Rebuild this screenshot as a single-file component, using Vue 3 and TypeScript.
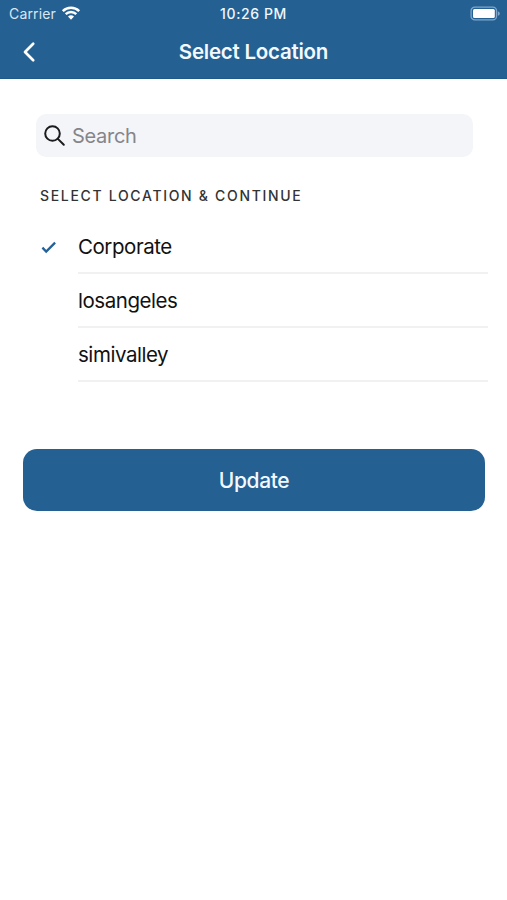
<script setup lang="ts">
import { ref, computed } from 'vue'

const locations = ['Corporate', 'losangeles', 'simivalley']
const selected = ref('Corporate')
const query = ref('')
const visible = computed(() =>
  locations.filter((name) => name.toLowerCase().includes(query.value.toLowerCase()))
)
</script>

<template>
  <div class="screen">
    <header class="header">
      <div class="status">
        <div class="carrier">
          <span>Carrier</span>
          <svg class="wifi" width="20" height="15" viewBox="0 0 20 15">
            <path d="M1.8 5.1A11.7 11.7 0 0 1 18.2 5.1M4.7 8.2A7.6 7.6 0 0 1 15.3 8.2" />
            <path class="dot" d="M7 10.6A4.4 4.4 0 0 1 13 10.6L10 13.7Z" />
          </svg>
        </div>
        <span class="time">10:26 PM</span>
        <svg class="battery" width="32" height="16" viewBox="0 0 32 16">
          <rect class="shell" x="1.1" y="1.2" width="25.4" height="12.6" rx="3.6" />
          <rect class="charge" x="3" y="3.1" width="21.8" height="8.8" rx="1.5" />
          <path class="cap" d="M27.8 5.2C30.4 6 30.4 9 27.8 9.8Z" />
        </svg>
      </div>
      <div class="nav">
        <button class="back" aria-label="Back">
          <svg width="14" height="22" viewBox="0 0 14 22">
            <path d="M11.2 2.8L3 11L11.2 19.2" />
          </svg>
        </button>
        <h1 class="title">Select Location</h1>
      </div>
    </header>

    <main class="content">
      <label class="search">
        <svg class="lens" width="24" height="24" viewBox="0 0 24 24">
          <circle cx="9.5" cy="9.5" r="7.3" />
          <path d="M14.9 14.9L20.8 20.8" />
        </svg>
        <input v-model="query" class="field" type="text" placeholder="Search" />
      </label>

      <h2 class="caption">SELECT LOCATION &amp; CONTINUE</h2>

      <ul class="list">
        <li v-for="name in visible" :key="name" class="row" @click="selected = name">
          <span class="mark">
            <svg v-if="name === selected" width="16" height="14" viewBox="0 0 16 14">
              <path d="M1.4 7.6L5.2 11.5L14.1 2.6" />
            </svg>
          </span>
          <span class="name">{{ name }}</span>
        </li>
      </ul>

      <button class="update">Update</button>
    </main>
  </div>
</template>

<style>
body {
  margin: 0;
  background: #fff;
}
</style>

<style scoped>
.screen {
  min-height: 900px;
  background: #fff;
  color: #111;
  font-family: Inter, 'Liberation Sans', sans-serif;
}
.header {
  height: 79px;
  box-sizing: border-box;
  background: #246092;
  border-bottom: 1px solid #1f598c;
  color: #fff;
}
.status {
  height: 27px;
  display: grid;
  grid-template-columns: 1fr auto 1fr;
  align-items: center;
}
.carrier {
  display: flex;
  align-items: center;
  gap: 5px;
  padding-left: 9px;
  font-size: 14px;
  line-height: 27px;
  letter-spacing: 0.15px;
  color: #d9e7f3;
}
.wifi {
  fill: none;
  stroke: #fff;
  stroke-width: 2.5;
}
.wifi .dot {
  fill: #fff;
  stroke: none;
}
.time {
  font-size: 14px;
  font-weight: 500;
  line-height: 27px;
  letter-spacing: 0.6px;
  color: #f0f7fd;
}
.battery {
  justify-self: end;
  margin-right: 5px;
}
.shell {
  fill: none;
  stroke: #7fa7cc;
  stroke-width: 1.3;
}
.charge {
  fill: #fff;
}
.cap {
  fill: #7fa7cc;
}
.nav {
  display: grid;
  grid-template-columns: 1fr auto 1fr;
  align-items: center;
  height: 50px;
}
.back {
  display: flex;
  width: 44px;
  padding: 0 0 0 22px;
  border: 0;
  background: none;
}
.back svg {
  fill: none;
  stroke: #fff;
  stroke-width: 2.7;
  stroke-linecap: round;
  stroke-linejoin: round;
}
.title {
  margin: 0;
  font-size: 20.5px;
  font-weight: 600;
  line-height: 28px;
  letter-spacing: -0.24px;
  color: #f3f9fe;
}
.content {
  display: flex;
  flex-direction: column;
  padding: 35px 19px 0 23px;
}
.search {
  display: flex;
  align-items: center;
  gap: 5px;
  height: 43px;
  margin: 0 15px 0 12.5px;
  padding-left: 7.5px;
  box-sizing: border-box;
  border-radius: 10px;
  background: #f3f5f9;
}
.lens {
  flex: none;
  fill: none;
  stroke: #1b1b1d;
  stroke-width: 2;
  stroke-linecap: round;
}
.field {
  flex: 1;
  min-width: 0;
  padding: 0;
  border: 0;
  outline: 0;
  background: none;
  font: 20px/28px Inter, 'Liberation Sans', sans-serif;
  letter-spacing: -0.3px;
}
.field::placeholder {
  color: #858589;
  opacity: 1;
}
.caption {
  margin: 29px 0 0 17px;
  font-size: 14px;
  font-weight: 500;
  line-height: 20px;
  letter-spacing: 1.68px;
  color: #333;
}
.list {
  margin: 14px 0 0;
  padding: 0;
  list-style: none;
}
.row {
  display: flex;
  height: 54px;
}
.mark {
  display: flex;
  width: 55px;
  align-items: center;
  box-sizing: border-box;
  padding-left: 18px;
}
.mark path {
  fill: none;
  stroke: #246099;
  stroke-width: 2.3;
}
.name {
  flex: 1;
  box-sizing: border-box;
  border-bottom: 2px solid #f1f1f2;
  font-size: 20.5px;
  line-height: 53px;
  letter-spacing: -0.45px;
}
.update {
  height: 62px;
  margin: 67px 3px 0 0;
  padding: 1px 0 0;
  border: 0;
  border-radius: 14px;
  background: #246092;
  color: #f3f9fe;
  font: 500 21px/61px Inter, 'Liberation Sans', sans-serif;
  letter-spacing: -0.35px;
}
</style>
